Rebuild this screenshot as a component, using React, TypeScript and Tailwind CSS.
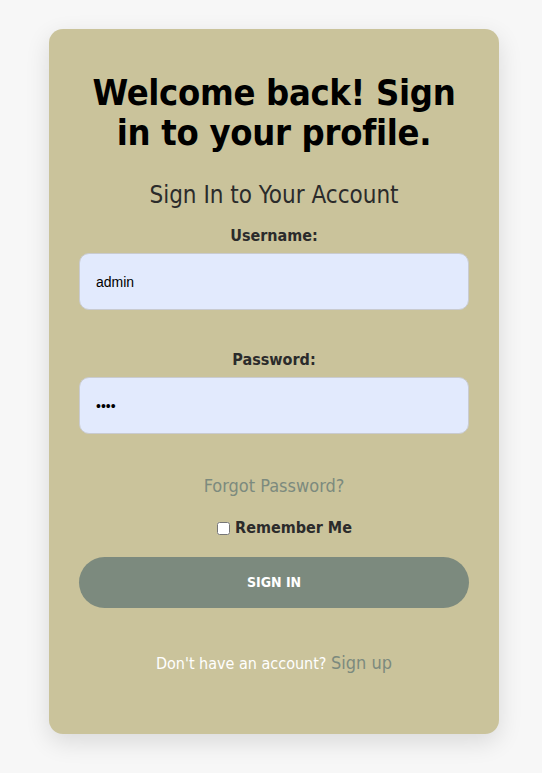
import { useState } from 'react';

const font = { fontFamily: '"DejaVu Sans Condensed", "DejaVu Sans", Verdana, sans-serif' };

export default function App() {
  const [username, setUsername] = useState('admin');
  const [password, setPassword] = useState('1234');
  const [remember, setRemember] = useState(false);

  return (
    <div className="min-h-[773px] w-full bg-[#f7f7f7] pt-[29px] pb-[40px]" style={font}>
      <div className="ml-[49px] w-[450px] rounded-[14px] bg-[#cac39b] px-[30px] pt-[44px] pb-[57px] shadow-[0_8px_24px_rgba(0,0,0,0.12)]">
        <h1 className="text-center text-[36px] font-bold leading-[40px] text-black tracking-[-0.3px]">
          Welcome back! Sign in to your profile.
        </h1>
        <h2 className="mt-[26px] text-center text-[24px] leading-[32px] text-[#2b2b2b]">Sign In to Your Account</h2>

        <form onSubmit={(e) => e.preventDefault()}>
          <label className="mt-[13px] block text-center text-[16px] font-bold leading-[24px] text-[#2b2b2b]">
            Username:
          </label>
          <input
            value={username}
            onChange={(e) => setUsername(e.target.value)}
            className="mt-[5px] block h-[57px] w-full rounded-[10px] border border-[#c9cbd0] bg-[#e2eafd] px-[16px] text-[14px] text-black outline-none"
            style={{ fontFamily: '"Liberation Sans", Arial, sans-serif' }}
          />

          <label className="mt-[38px] block text-center text-[16px] font-bold leading-[24px] text-[#2b2b2b]">
            Password:
          </label>
          <input
            type="password"
            value={password}
            onChange={(e) => setPassword(e.target.value)}
            className="mt-[5px] block h-[57px] w-full rounded-[10px] border border-[#c9cbd0] bg-[#e2eafd] px-[16px] text-[14px] text-black outline-none"
            style={{ fontFamily: '"Liberation Sans", Arial, sans-serif' }}
          />

          <div className="mt-[39px] text-center text-[18px] leading-[26px]">
            <a href="#" className="text-[#7c8a7e]">Forgot Password?</a>
          </div>

          <div className="mt-[17px] flex items-center justify-center gap-[5px] pl-[21px] leading-[24px]">
            <input
              type="checkbox"
              checked={remember}
              onChange={(e) => setRemember(e.target.checked)}
              className="h-[13px] w-[13px]"
            />
            <span className="text-[16px] font-bold text-[#2b2b2b]">Remember Me</span>
          </div>

          <button
            type="submit"
            className="mt-[17px] block h-[51px] w-full rounded-full bg-[#7c8a7e] text-[14px] font-bold text-white"
          >
            SIGN IN
          </button>
        </form>

        <p className="mt-[42px] text-center text-[16px] leading-[26px] text-white">
          Don't have an account? <a href="#" className="text-[18px] text-[#7c8a7e]">Sign up</a>
        </p>
      </div>
    </div>
  );
}
